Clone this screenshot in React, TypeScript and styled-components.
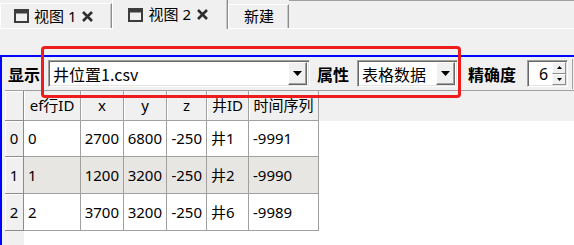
import React from "react";
import styled, { createGlobalStyle, css } from "styled-components";

const GlobalStyle = createGlobalStyle`
  html, body { margin: 0; padding: 0; background: #f0f0f0; }
  body { font-family: "Noto Sans", "Noto Sans CJK SC", sans-serif; color: #000; }
  * { box-sizing: border-box; }
`;

const Page = styled.div`
  position: relative;
  width: 574px;
  height: 245px;
  overflow: hidden;
  background: #f0f0f0;
  display: flex;
  flex-direction: column;
`;

const TabBar = styled.div`
  height: 29px;
  display: flex;
  align-items: flex-end;
  border-bottom: 1px solid #ffffff;
  flex-shrink: 0;
`;

const Tab = styled.div<{ $active?: boolean }>`
  display: flex;
  align-items: center;
  gap: 5px;
  padding: 0 ${(p) => (p.$active ? "18px 0 15px" : "17px 0 13px")};
  font-size: 15px;
  line-height: 1;
  background: #f0f0f0;
  border-top: 1px solid #ffffff;
  border-left: 1px solid #ffffff;
  border-right: 1px solid #8c8c8c;
  box-shadow: inset -1px 0 0 #c8c8c8;
  ${(p) =>
    p.$active
      ? css`
          height: 30px;
          margin-bottom: -1px;
          border-top-color: #f0f0f0;
          position: relative;
          z-index: 1;
        `
      : css`
          height: 25px;
        `}
`;

const PlainTab = styled(Tab)`
  padding: 0 14px 0 15px;
  height: 24px;
`;

const TabLabel = styled.span`
  white-space: nowrap;
`;

const TabFiller = styled.div`
  flex: 1;
  align-self: stretch;
  border-top: 1px solid #a0a0a0;
`;

const Spacer = styled.div`
  height: 26px;
  flex-shrink: 0;
`;

const Panel = styled.div`
  flex: 1;
  display: flex;
  flex-direction: column;
  border-top: 2px solid #0000ff;
  border-left: 2px solid #0000ff;
  min-height: 0;
`;

const Toolbar = styled.div`
  height: 33px;
  display: flex;
  align-items: center;
  padding-left: 6px;
  flex-shrink: 0;
  overflow: hidden;
`;

const Label = styled.span<{ $ml?: number }>`
  margin-left: ${(p) => p.$ml ?? 0}px;
  font-size: 16px;
  font-weight: 700;
  font-family: "Noto Sans CJK SC", sans-serif;
  white-space: nowrap;
  line-height: 1;
`;

const Combo = styled.div<{ $w: number; $ml: number }>`
  width: ${(p) => p.$w}px;
  margin-left: ${(p) => p.$ml}px;
  height: 27px;
  flex-shrink: 0;
  display: flex;
  align-items: center;
  background: #fff;
  border-top: 1px solid #a0a0a0;
  border-left: 1px solid #a0a0a0;
  border-bottom: 1px solid #ffffff;
  border-right: 1px solid #ffffff;
  box-shadow: inset 1px 1px 0 #696969, inset -1px -1px 0 #e3e3e3;
  padding: 0 2px 0 4px;
`;

const ComboText = styled.span`
  flex: 1;
  font-size: 16px;
  font-family: "Noto Sans CJK SC", sans-serif;
  line-height: 1;
  white-space: nowrap;
`;

const DropButton = styled.div`
  width: 19px;
  height: 23px;
  background: #f0f0f0;
  border-top: 1px solid #ffffff;
  border-left: 1px solid #ffffff;
  border-right: 1px solid #696969;
  border-bottom: 1px solid #696969;
  box-shadow: inset -1px -1px 0 #a0a0a0;
  display: flex;
  align-items: center;
  justify-content: center;
`;

const Spin = styled.div`
  width: 41px;
  height: 27px;
  margin-left: 11px;
  flex-shrink: 0;
  display: flex;
  align-items: center;
  background: #fff;
  border-top: 1px solid #a0a0a0;
  border-left: 1px solid #a0a0a0;
  border-bottom: 1px solid #ffffff;
  border-right: 1px solid #ffffff;
  box-shadow: inset 1px 1px 0 #696969, inset -1px -1px 0 #e3e3e3;
  padding: 1px 1px 1px 0;
`;

const SpinValue = styled.span`
  flex: 1;
  text-align: right;
  padding-right: 4px;
  font-size: 16px;
  line-height: 1;
`;

const SpinButtons = styled.div`
  display: flex;
  flex-direction: column;
  width: 14px;
  height: 100%;
`;

const SpinButton = styled.div`
  flex: 1;
  background: #f0f0f0;
  border-top: 1px solid #ffffff;
  border-left: 1px solid #ffffff;
  border-right: 1px solid #8c8c8c;
  border-bottom: 1px solid #8c8c8c;
  display: flex;
  align-items: center;
  justify-content: center;
`;

const NextControl = styled.div`
  width: 10px;
  height: 30px;
  margin-left: 4px;
  flex-shrink: 0;
  border-left: 1px solid #a0a0a0;
`;

const Grid = styled.div`
  flex: 1;
  margin-left: 3px;
  display: grid;
  grid-template-columns: 19px 57px 43px 43px 40px 42px 70px 1fr;
  grid-template-rows: 30px 36px 37px 37px 1fr;
  border-top: 1px solid #a0a0a0;
  background: #fff;
  min-height: 0;
`;

const HeadCell = styled.div`
  background: #f0f0f0;
  border-right: 1px solid #a0a0a0;
  border-bottom: 1px solid #a0a0a0;
  box-shadow: inset 1px 0 0 #ffffff;
  display: flex;
  align-items: center;
  justify-content: center;
  font-size: 15px;
  line-height: 1;
  white-space: nowrap;
`;

const HeadFiller = styled.div`
  background: #f0f0f0;
`;

const RowHead = styled.div`
  background: #f0f0f0;
  border-right: 1px solid #8c8c8c;
  border-bottom: 1px solid #8c8c8c;
  box-shadow: inset 1px 1px 0 #ffffff;
  display: flex;
  align-items: center;
  justify-content: center;
  font-size: 15px;
  line-height: 1;
`;

const RowHeadFiller = styled.div`
  background: #f0f0f0;
`;

const Cell = styled.div<{ $right?: boolean; $alt?: boolean }>`
  background: ${(p) => (p.$alt ? "#e8e6e3" : "#ffffff")};
  border-right: 1px solid #a0a0a0;
  border-bottom: 1px solid #a0a0a0;
  display: flex;
  align-items: center;
  justify-content: ${(p) => (p.$right ? "flex-end" : "flex-start")};
  padding: 0 4px;
  font-size: 15px;
  line-height: 1;
  white-space: nowrap;
`;

const BlankCell = styled.div``;

const Highlight = styled.div`
  position: absolute;
  left: 41px;
  top: 46px;
  width: 420px;
  height: 52px;
  border: 3px solid #ee1c1c;
  border-radius: 4px;
  pointer-events: none;
`;

const WindowIcon = () => (
  <svg width="15" height="14" viewBox="0 0 15 14">
    <rect x="1" y="1" width="13" height="12" fill="none" stroke="#3c3c3c" strokeWidth="2" />
    <rect x="1" y="1" width="13" height="3.5" fill="#3c3c3c" />
  </svg>
);

const CloseIcon = () => (
  <svg width="13" height="13" viewBox="0 0 13 13">
    <path d="M2 2 L11 11 M11 2 L2 11" stroke="#2e2e2e" strokeWidth="2.6" />
  </svg>
);

const DownArrow = () => (
  <svg width="9" height="5" viewBox="0 0 9 5">
    <polygon points="0,0 9,0 4.5,5" fill="#000" />
  </svg>
);

const SmallArrow = ({ up }: { up?: boolean }) => (
  <svg width="5" height="3" viewBox="0 0 5 3">
    <polygon points={up ? "0,3 5,3 2.5,0" : "0,0 5,0 2.5,3"} fill="#000" />
  </svg>
);

const headers = ["ef行ID", "x", "y", "z", "井ID", "时间序列"];
const rows = [
  ["0", "2700", "6800", "-250", "井1", "-9991"],
  ["1", "1200", "3200", "-250", "井2", "-9990"],
  ["2", "3700", "3200", "-250", "井6", "-9989"],
];
const rightAligned = [false, true, true, true, false, false];

export default function App() {
  return (
    <>
      <GlobalStyle />
      <Page>
        <TabBar>
          <Tab>
            <WindowIcon />
            <TabLabel>视图 1</TabLabel>
            <CloseIcon />
          </Tab>
          <Tab $active>
            <WindowIcon />
            <TabLabel>视图 2</TabLabel>
            <CloseIcon />
          </Tab>
          <PlainTab>
            <TabLabel>新建</TabLabel>
          </PlainTab>
          <TabFiller />
        </TabBar>
        <Spacer />
        <Panel>
          <Toolbar>
            <Label>显示</Label>
            <Combo $w={262} $ml={8}>
              <ComboText>井位置1.csv</ComboText>
              <DropButton>
                <DownArrow />
              </DropButton>
            </Combo>
            <Label $ml={7}>属性</Label>
            <Combo $w={101} $ml={8}>
              <ComboText>表格数据</ComboText>
              <DropButton>
                <DownArrow />
              </DropButton>
            </Combo>
            <Label $ml={10}>精确度</Label>
            <Spin>
              <SpinValue>6</SpinValue>
              <SpinButtons>
                <SpinButton>
                  <SmallArrow up />
                </SpinButton>
                <SpinButton>
                  <SmallArrow />
                </SpinButton>
              </SpinButtons>
            </Spin>
            <NextControl />
          </Toolbar>
          <Grid>
            <RowHead />
            {headers.map((h) => (
              <HeadCell key={h}>{h}</HeadCell>
            ))}
            <HeadFiller />
            {rows.map((r, i) => (
              <React.Fragment key={i}>
                <RowHead>{i}</RowHead>
                {r.map((v, j) => (
                  <Cell key={j} $right={rightAligned[j]} $alt={i === 1}>
                    {v}
                  </Cell>
                ))}
                <BlankCell />
              </React.Fragment>
            ))}
            <RowHeadFiller />
          </Grid>
        </Panel>
        <Highlight />
      </Page>
    </>
  );
}
